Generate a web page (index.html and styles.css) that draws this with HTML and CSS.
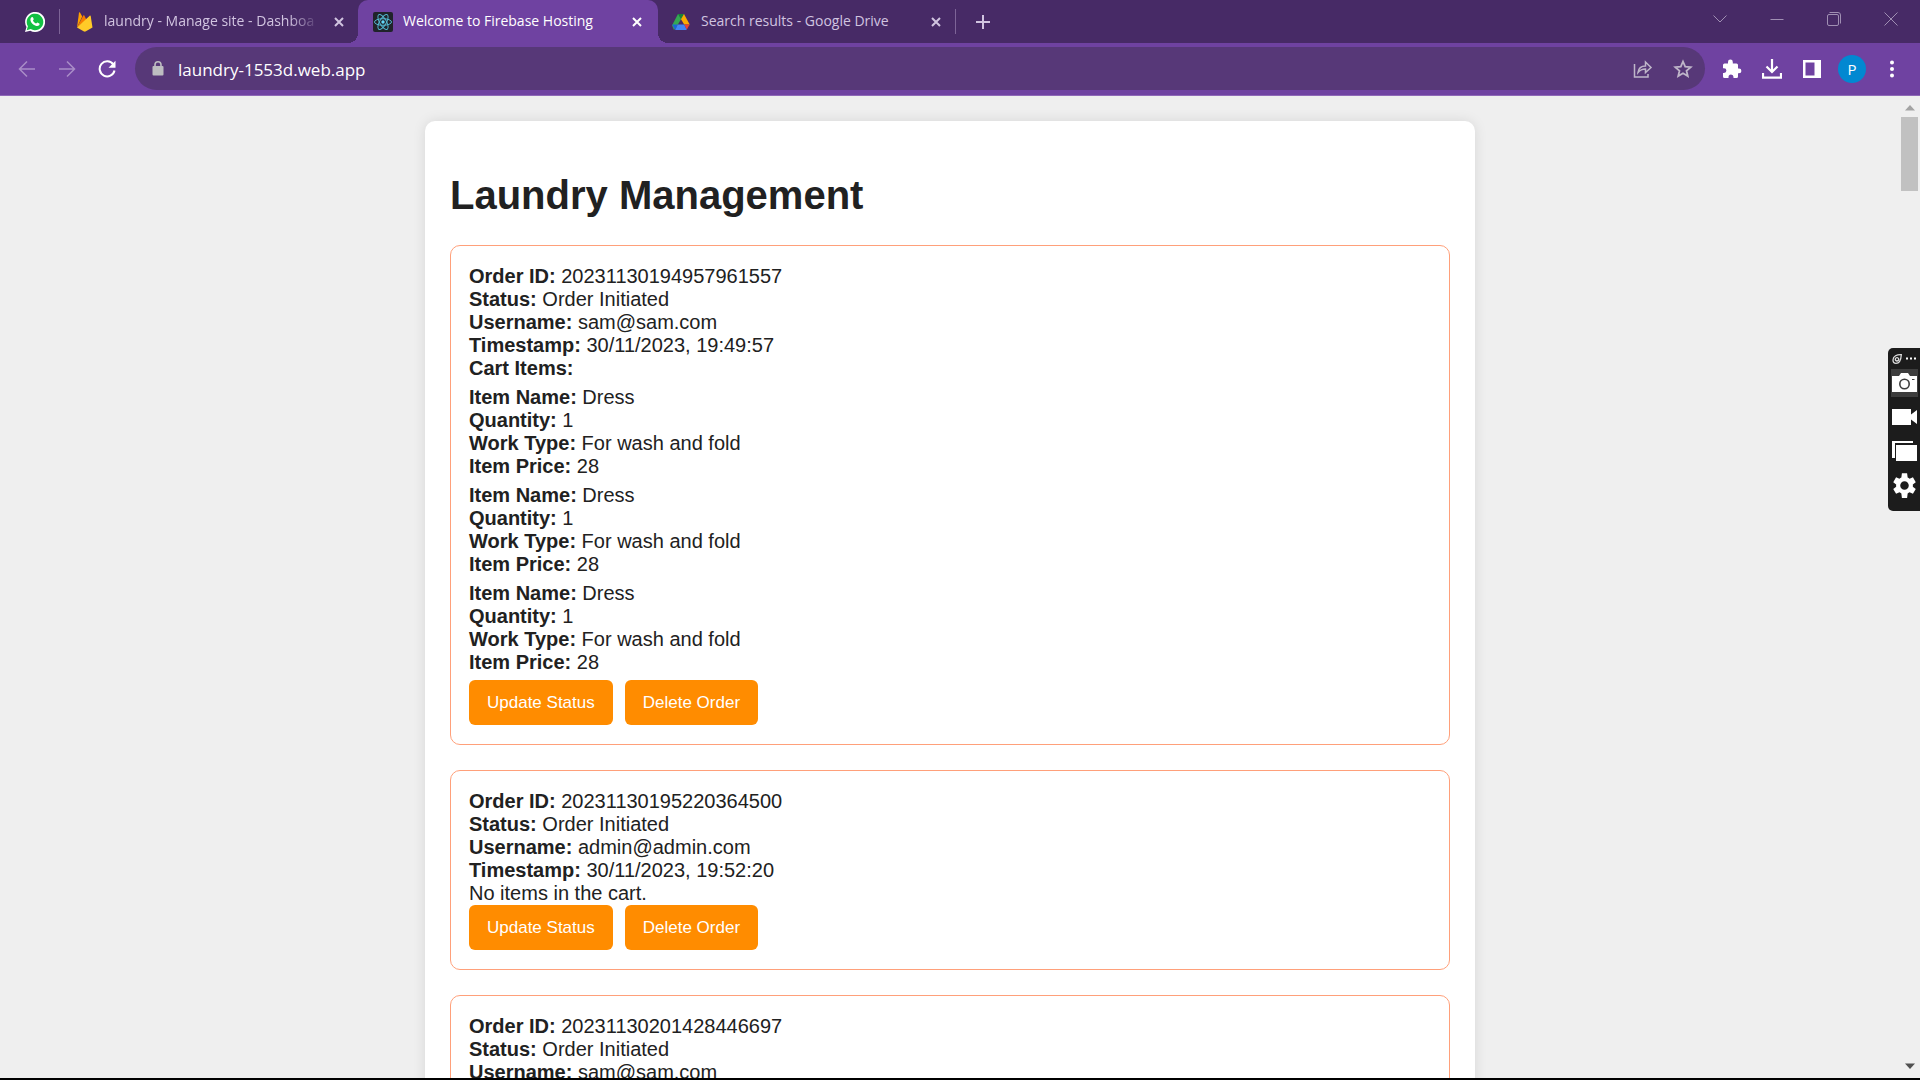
FILE: index.html
```html
<!DOCTYPE html>
<html lang="en">
<head>
<meta charset="utf-8">
<title>Welcome to Firebase Hosting</title>
<link rel="stylesheet" href="styles.css">
</head>
<body>
<div class="window">
  <header class="chrome">
    <div class="tabstrip">
      <a class="pinned" href="#" aria-label="WhatsApp">
        <svg width="20" height="20" viewBox="0 0 20 20"><path d="M0 20l1.500-5A10 10 0 1 1 5.300 18.700z" fill="#fff"/><path d="M1.700 18.300l1.200-4A8.300 8.300 0 1 1 5.700 17.100z" fill="#12c143"/><path d="M6.600 5.300c.6-.5 1.200-.3 1.400.2l.7 1.500c.2.500-.7 1.200-.7 1.500.5 1.300 1.700 2.400 3 3 .5.100 1.100-1.200 1.500-1l1.800.9c.5.300.2 1.400-.2 1.900-1 1-2.500.9-4 .2-2.100-1-3.700-2.700-4.500-4.600-.4-1.400-.1-2.700 1-3.600z" fill="#fff"/></svg>
      </a>
      <span class="divider"></span>
      <div class="tab tab-first">
        <svg class="fav" width="20" height="20" viewBox="0 0 20 20"><path d="M3 15.500L5 .8c.1-.6.7-.7 1-.2l2.200 4z" fill="#ffa000"/><path d="M3 15.500L9.300 3.500c.2-.5.800-.5 1 0L12.500 8z" fill="#f57c00"/><path d="M3 15.500L15.700 3.700c.4-.4.900-.2 1 .3l1.800 11.500-7 4.100c-.5.200-1 .2-1.500 0z" fill="#ffca28"/></svg>
        <span class="tab-title fade">laundry - Manage site - Dashboa</span>
        <button class="close" aria-label="Close tab"><svg width="10" height="10" viewBox="0 0 10 10"><path d="M1 1l8 8M9 1L1 9"/></svg></button>
      </div>
      <div class="tab tab-active">
        <svg class="fav" width="20" height="20" viewBox="0 0 20 20"><rect width="20" height="20" rx="2" fill="#20232a"/><g fill="none" stroke="#53b7cf" stroke-width="1"><ellipse cx="10" cy="10" rx="8.500" ry="3.300"/><ellipse cx="10" cy="10" rx="8.500" ry="3.300" transform="rotate(60 10 10)"/><ellipse cx="10" cy="10" rx="8.500" ry="3.300" transform="rotate(120 10 10)"/></g><circle cx="10" cy="10" r="1.700" fill="#61dafb"/></svg>
        <span class="tab-title">Welcome to Firebase Hosting</span>
        <button class="close" aria-label="Close tab"><svg width="10" height="10" viewBox="0 0 10 10"><path d="M1 1l8 8M9 1L1 9"/></svg></button>
      </div>
      <div class="tab tab-last">
        <svg class="fav" width="20" height="20" viewBox="0 0 20 20"><path d="M7 2h6l-3 5.300-4 6.700-3 4-2-4.500z" fill="#34a853"/><path d="M7 2h6l-3 5.300z" fill="#188038"/><path d="M13 2l5.700 10.500h-5.500L10 7.300z" fill="#fbab00"/><path d="M13.200 12.500h5.500l-3 5.300z" fill="#ea4335"/><path d="M1.200 12.500h5.600L4.200 18z" fill="#1a66d6"/><path d="M6.800 12.500h6.400l2.500 5.500H4.200z" fill="#4285f4"/></svg>
        <span class="tab-title">Search results - Google Drive</span>
        <button class="close" aria-label="Close tab"><svg width="10" height="10" viewBox="0 0 10 10"><path d="M1 1l8 8M9 1L1 9"/></svg></button>
      </div>
      <span class="divider"></span>
      <button class="newtab" aria-label="New tab"><svg width="16" height="16" viewBox="0 0 16 16"><path d="M8 1v14M1 8h14"/></svg></button>
      <div class="wincontrols">
        <button aria-label="Search tabs"><svg width="14" height="14" viewBox="0 0 14 14"><path d="M.5 3.500L7 10l6.500-6.500"/></svg></button>
        <button aria-label="Minimize"><svg width="14" height="14" viewBox="0 0 14 14"><path d="M.5 7.500h13"/></svg></button>
        <button aria-label="Restore"><svg width="14" height="14" viewBox="0 0 14 14"><rect x=".5" y="2.500" width="11" height="11" rx="1.500"/><path d="M2.500 .5h8.500a2.500 2.500 0 0 1 2.500 2.500v8.500"/></svg></button>
        <button aria-label="Close"><svg width="14" height="14" viewBox="0 0 14 14"><path d="M.5 .5l13 13M13.500 .5l-13 13"/></svg></button>
      </div>
    </div>
    <div class="toolbar">
      <div class="nav">
        <button class="dim" aria-label="Back"><svg width="18" height="18" viewBox="0 0 18 18"><path d="M17 9H2M9 1.500L1.500 9 9 16.500"/></svg></button>
        <button class="dim" aria-label="Forward"><svg width="18" height="18" viewBox="0 0 18 18"><path d="M1 9h15M9 1.500L16.500 9 9 16.500"/></svg></button>
        <button aria-label="Reload"><svg width="18" height="18" viewBox="0 0 18 18"><path d="M15.300 4.500A7.500 7.500 0 1 0 16.500 10.500" stroke-width="2"/><path d="M17.500 .8v7h-7z" fill="#fff" stroke="none"/></svg></button>
      </div>
      <div class="omnibox">
        <svg width="12" height="15" viewBox="0 0 12 15"><rect x=".5" y="5" width="11" height="9.500" rx="1" fill="#bdbdc1"/><path d="M3 6V3.800a3 3 0 0 1 6 0V6" fill="none" stroke="#bdbdc1" stroke-width="1.600"/></svg>
        <input class="url" type="text" aria-label="Address" value="laundry-1553d.web.app">
        <button aria-label="Share"><svg width="20" height="18" viewBox="0 0 20 18"><path d="M1.500 4v13h13.500v-3M5 12.500c.5-4 3-6.500 7.500-6.500V2l5.500 5.500-5.500 5v-3.500C9 9 7 10 5 12.500z"/></svg></button>
        <button aria-label="Bookmark"><svg width="20" height="20" viewBox="0 0 20 20"><path d="M10 2.500l2.200 5.100 5.500.5-4.200 3.600 1.300 5.400L10 14.300l-4.800 2.800 1.300-5.400-4.200-3.600 5.500-.5z" stroke-width="1.800"/></svg></button>
      </div>
      <div class="actions">
        <button aria-label="Extensions"><svg width="20" height="20" viewBox="0 0 20 20"><path d="M1 6a1.500 1.500 0 0 1 1.500-1.500H6V3a2.400 2.400 0 0 1 4.800 0v1.500h3.700A1.500 1.500 0 0 1 16 6v3.500h1a2.400 2.400 0 0 1 0 4.800h-1V17.500a1.500 1.500 0 0 1-1.500 1.500H11.500v-1a2.400 2.400 0 0 0-5 0v1H2.500A1.500 1.500 0 0 1 1 17.500V14h1a2.400 2.400 0 0 0 0-4.800H1z" fill="#fff" stroke="none"/></svg></button>
        <button aria-label="Downloads"><svg width="20" height="20" viewBox="0 0 20 20"><path d="M10 0v12M4.500 7.500L10 13l5.500-5.500M1 14v4.700h18V14" stroke-width="2.200"/></svg></button>
        <button aria-label="Side panel"><svg width="18" height="18" viewBox="0 0 18 18"><path d="M0 0h18v18H0zM2.500 2.500v13h9v-13z" fill="#fff" fill-rule="evenodd" stroke="none"/></svg></button>
        <button class="avatar" aria-label="Profile">P</button>
        <button aria-label="Menu"><svg width="6" height="18" viewBox="0 0 6 18"><g fill="#fff" stroke="none"><circle cx="3" cy="2.500" r="2"/><circle cx="3" cy="9" r="2"/><circle cx="3" cy="15.500" r="2"/></g></svg></button>
      </div>
    </div>
  </header>
  <div class="viewport">
    <div class="page">
      <main class="card">
        <h1>Laundry Management</h1>
        <section class="order">
          <p><b>Order ID:</b> 20231130194957961557</p>
          <p><b>Status:</b> Order Initiated</p>
          <p><b>Username:</b> sam@sam.com</p>
          <p><b>Timestamp:</b> 30/11/2023, 19:49:57</p>
          <p><b>Cart Items:</b></p>
          <ul class="items">
            <li><p><b>Item Name:</b> Dress</p><p><b>Quantity:</b> 1</p><p><b>Work Type:</b> For wash and fold</p><p><b>Item Price:</b> 28</p></li>
            <li><p><b>Item Name:</b> Dress</p><p><b>Quantity:</b> 1</p><p><b>Work Type:</b> For wash and fold</p><p><b>Item Price:</b> 28</p></li>
            <li><p><b>Item Name:</b> Dress</p><p><b>Quantity:</b> 1</p><p><b>Work Type:</b> For wash and fold</p><p><b>Item Price:</b> 28</p></li>
          </ul>
          <div class="buttons"><button class="btn">Update Status</button><button class="btn">Delete Order</button></div>
        </section>
        <section class="order">
          <p><b>Order ID:</b> 20231130195220364500</p>
          <p><b>Status:</b> Order Initiated</p>
          <p><b>Username:</b> admin@admin.com</p>
          <p><b>Timestamp:</b> 30/11/2023, 19:52:20</p>
          <p>No items in the cart.</p>
          <div class="buttons"><button class="btn">Update Status</button><button class="btn">Delete Order</button></div>
        </section>
        <section class="order">
          <p><b>Order ID:</b> 20231130201428446697</p>
          <p><b>Status:</b> Order Initiated</p>
          <p><b>Username:</b> sam@sam.com</p>
        </section>
      </main>
    </div>
    <div class="scrollbar">
      <svg width="10" height="6" viewBox="0 0 10 6"><path d="M0 5.500L5 0l5 5.500z" fill="#a3a3a3"/></svg>
      <span class="thumb"></span>
      <svg width="10" height="6" viewBox="0 0 10 6"><path d="M0 .5L5 6l5-5.500z" fill="#505050"/></svg>
    </div>
  </div>
  <aside class="recorder">
    <div class="rec-head">
      <svg width="10" height="10" viewBox="0 0 10 10"><g fill="none" stroke="#ddd" stroke-width="1.300"><path d="M9.300 .7C5 .5 1 2 1 6c0 2 1 3.300 3 3.300 3.500 0 5-3.500 5.300-8.600z"/><circle cx="5" cy="5.300" r="1.700"/></g></svg>
      <svg width="11" height="3" viewBox="0 0 11 3"><g fill="#fff"><rect x="0" y=".5" width="2" height="2"/><rect x="4" y=".5" width="2" height="2"/><rect x="8" y=".5" width="2" height="2"/></g></svg>
    </div>
    <button class="on" aria-label="Screenshot"><svg width="25" height="20" viewBox="0 0 25 20"><path d="M0 3h7l2-3h7l2 3h7v16H0z" fill="#fff"/><circle cx="12.500" cy="11" r="4.700" fill="none" stroke="#3d3d3d" stroke-width="1.600"/><path d="M20 6.500h2.500" stroke="#3d3d3d"/></svg></button>
    <button aria-label="Record video"><svg width="25" height="16" viewBox="0 0 25 16"><path d="M0 0h19v5.500L25 1v14l-6-4.500V16H0z" fill="#fff"/></svg></button>
    <button aria-label="Gallery"><svg width="25" height="20" viewBox="0 0 25 20"><path d="M0 0h21v2H3v15H0zM4 4h21v16H4z" fill="#fff"/></svg></button>
    <button aria-label="Settings"><svg width="27" height="27" viewBox="0 0 24 24"><path fill="#fff" d="M19.400 13a7.500 7.500 0 0 0 0-2l2.600-2-2.500-4.300-3 1.200a8 8 0 0 0-1.700-1L14.300 1H9.700l-.5 3.900a8 8 0 0 0-1.700 1l-3-1.200L2 9l2.600 2a7.500 7.500 0 0 0 0 2L2 15l2.500 4.300 3-1.200a8 8 0 0 0 1.700 1l.5 3.900h4.600l.5-3.900a8 8 0 0 0 1.700-1l3 1.200L22 15zM12 15.800a3.800 3.800 0 1 1 0-7.600 3.800 3.800 0 0 1 0 7.600z"/></svg></button>
  </aside>
</div>
</body>
</html>
```
FILE: styles.css
```css
* { box-sizing: border-box; }
body { margin: 0; background: #efefef; font-family: "Liberation Sans", Arial, sans-serif; }
p, h1, ul { margin: 0; padding: 0; }
ul { list-style: none; }
button { padding: 0; border: 0; background: none; color: inherit; font-family: inherit; }
svg { display: block; flex: none; }

.window { position: relative; display: flex; flex-direction: column; height: 100vh; border-bottom: 2px solid #000; overflow: hidden; }

/* Browser frame */
.chrome { flex: none; font-family: "Open Sans", "Noto Sans", sans-serif; }
.chrome button { display: flex; align-items: center; justify-content: center; }
.chrome button svg { fill: none; stroke: currentColor; stroke-width: 1.500; }
.tabstrip { display: flex; align-items: center; height: 43px; background: #472a66; color: #d1c4e0; }
.pinned { width: 59px; padding-left: 25px; }
.divider { width: 1px; height: 25px; background: #7d6497; }
.tab { display: flex; align-items: center; height: 43px; font-size: 14px; }
.tab-title { flex: 1; margin-left: 10px; padding-bottom: 2px; white-space: nowrap; overflow: hidden; line-height: 22px; }
.fade { -webkit-mask-image: linear-gradient(to right, #000 185px, transparent 216px); mask-image: linear-gradient(to right, #000 185px, transparent 216px); }
.close { width: 20px; height: 20px; margin-left: 10px; }
.chrome .close svg { stroke-width: 2; }
.tab-first { width: 298px; padding: 0 9px 0 14px; }
.tab-active { position: relative; width: 300px; padding: 0 11px 0 15px; border-radius: 10px 10px 0 0; background: #6f42a1; color: #fff; }
.tab-active::before, .tab-active::after { content: ""; position: absolute; bottom: 0; width: 10px; height: 10px; }
.tab-active::before { right: 100%; background: radial-gradient(circle at 0 0, transparent 10px, #6f42a1 10px); }
.tab-active::after { left: 100%; background: radial-gradient(circle at 100% 0, transparent 10px, #6f42a1 10px); }
.tab-last { width: 297px; padding: 0 9px 0 13px; }
.newtab { width: 54px; height: 32px; }
.chrome .newtab svg { stroke-width: 2; }
.wincontrols { display: flex; align-self: flex-start; margin: 0 1px 0 auto; color: #a08fb3; }
.wincontrols button { width: 57px; height: 37px; }
.chrome .wincontrols svg { stroke-width: 1; }

.toolbar { display: flex; align-items: center; height: 53px; padding: 0 18px 1px 7px; border-bottom: 1px solid #8e68b7; background: #6f42a1; color: #fff; }
.nav { display: flex; width: 128px; }
.nav button { width: 40px; height: 32px; }
.dim { color: #a98dc7; }
.omnibox { display: flex; flex: 1; align-items: center; height: 43px; padding: 0 12px 0 17px; border-radius: 22px; background: #573878; color: #bfb6c9; }
.url { flex: 1; min-width: 0; margin-left: 14px; padding: 2px 0 0; border: 0; outline: 0; background: none; color: #fff; font: 17px/24px "Open Sans", "Noto Sans", sans-serif; }
.omnibox button { width: 20px; height: 32px; margin-left: 20px; }
.actions { display: flex; align-items: center; gap: 20px; margin-left: 17px; }
.actions button { width: 20px; }
.actions .avatar { width: 28px; height: 28px; margin: 0 -4px; border-radius: 50%; background: #0288d1; font-size: 15px; }

/* Page */
.viewport { display: flex; flex: 1; min-height: 0; }
.page { flex: 1; overflow: hidden; padding: 25px 0; }
.card { max-width: 1050px; margin: 0 auto; padding: 25px; border-radius: 10px; background: #fff; color: #212121; box-shadow: 0 0 13px rgba(0, 0, 0, 0.1); }
h1 { margin: 26px 0 27px; font-size: 40px; line-height: 46px; }
.order { margin-bottom: 25px; padding: 19px 18px; border: 1px solid #ffa07a; border-radius: 10px; font-size: 20px; line-height: 23px; }
.items li { margin: 6px 0; }
.buttons { display: flex; gap: 12px; }
.btn { height: 45px; padding: 0 18px; border-radius: 6px; background: #ff8c00; color: #fff; font-size: 17px; line-height: 20px; }

.scrollbar { display: flex; flex-direction: column; align-items: center; width: 20px; padding: 9px 2px 9px 1px; }
.thumb { width: 17px; height: 74px; margin: 6px 0 auto; background: #c1c1c1; }

/* Screen recorder widget floating over the page */
.recorder { position: absolute; top: 348px; right: 0; display: flex; flex-direction: column; align-items: center; width: 32px; height: 163px; border-radius: 5px 0 0 5px; background: #1c1c1c; }
.rec-head { display: flex; align-items: center; justify-content: center; gap: 4px; height: 21px; }
.recorder button { display: flex; align-items: center; justify-content: center; width: 27px; height: 28px; margin-bottom: 6px; }
.recorder .on { background: #3d3d3d; }
```
